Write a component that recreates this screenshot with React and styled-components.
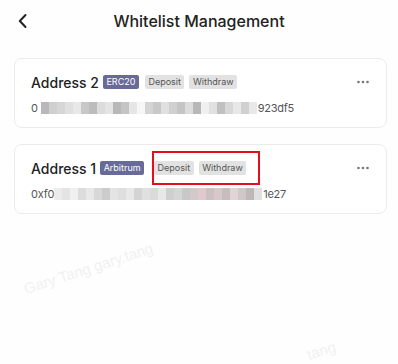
import React from "react";
import styled, { createGlobalStyle } from "styled-components";

const addresses = [
  {
    id: 2,
    name: "Address 2",
    network: "ERC20",
    head: "0",
    tail: "923df5",
    mosaic: [
      "#b8b8b8", "#cfcfcf", "#d6d6d6", "#e0e0e0", "#e8e8e8", "#c8c8c8", "#bcbcbc",
      "#dcdcdc", "#e4e4e4", "#b8b8b8", "#c4c4c4", "#e6e6e6", "#f6f6f6", "#d4d4d4",
      "#c8c8c8", "#e0e0e0", "#d0d0d0", "#c4c4c4", "#dcdcdc", "#b8b8b8", "#f0f0f0",
      "#e0e0e0", "#c0c0c0", "#d8d8d8", "#e8e8e8", "#d0d0d0", "#e8e8e8",
    ],
    gapBefore: 3,
  },
  {
    id: 1,
    name: "Address 1",
    network: "Arbitrum",
    head: "0xf0",
    tail: "1e27",
    mosaic: [
      "#ececec", "#e4e4e4", "#f0f0f0", "#dcdcdc", "#e8e8e8", "#d8d8d8", "#cccccc",
      "#e4e4e4", "#dedede", "#e8e8e8", "#d4d4d4", "#e0e0e0", "#dadada", "#e8e8e8",
      "#cfcfcf", "#d6d6d6", "#c8c8c8", "#d4c8ca", "#e0c8cc", "#ccc0c2", "#d8c8ca",
      "#c8bcbe", "#e0d4d6", "#d0c8c8", "#c0b8b8", "#e0e0e0",
    ],
    gapBefore: 0,
    highlighted: true,
  },
];

const App = () => {
  return (
    <Page>
      <GlobalStyle />
      <Header>
        <BackButton>
          <svg width="12" height="16" viewBox="0 0 12 16" fill="none">
            <path
              d="M8.5 2 L2.8 8 L8.5 14"
              stroke="#222"
              strokeWidth="2"
              strokeLinecap="round"
              strokeLinejoin="round"
            />
          </svg>
        </BackButton>
        <Title>Whitelist Management</Title>
        <span />
      </Header>

      <List>
        {addresses.map((item) => (
          <Card key={item.id}>
            <TopRow>
              <Name>{item.name}</Name>
              <NetworkTag>{item.network}</NetworkTag>
              <Permissions highlighted={item.highlighted}>
                <PermTag>Deposit</PermTag>
                <PermTag>Withdraw</PermTag>
                {item.highlighted && <Highlight />}
              </Permissions>
              <More>
                <svg width="12" height="4" viewBox="0 0 12 4">
                  <circle cx="1.5" cy="2" r="1.3" fill="#777" />
                  <circle cx="6" cy="2" r="1.3" fill="#777" />
                  <circle cx="10.5" cy="2" r="1.3" fill="#777" />
                </svg>
              </More>
            </TopRow>
            <AddressLine>
              <span>{item.head}</span>
              <Mosaic gapBefore={item.gapBefore}>
                {item.mosaic.map((c, i) => (
                  <Block key={i} style={{ background: c }} />
                ))}
              </Mosaic>
              <span>{item.tail}</span>
            </AddressLine>
          </Card>
        ))}
      </List>

      <Watermark top={280} left={27}>Gary Tang gary.tang</Watermark>
      <Watermark top={346} left={310}>tang</Watermark>
    </Page>
  );
};

const GlobalStyle = createGlobalStyle`
  html, body {
    margin: 0;
    padding: 0;
    background: #fefefe;
  }
  body {
    font-family: Inter, "Noto Sans", sans-serif;
    color: #222;
  }
`;

const Page = styled.div`
  position: relative;
  width: 398px;
  height: 364px;
  overflow: hidden;
  background: #fefefe;
`;

const Header = styled.div`
  height: 42px;
  display: grid;
  grid-template-columns: 1fr auto 1fr;
  align-items: center;
  padding: 0 16px;
`;

const BackButton = styled.div`
  display: flex;
  align-items: center;
  width: 20px;
  height: 20px;
  margin-left: 1px;
`;

const Title = styled.h1`
  margin: 0;
  font-size: 16px;
  font-weight: 500;
  color: #222;
`;

const List = styled.div`
  display: flex;
  flex-direction: column;
  gap: 16px;
  padding: 16px 11px 0 14px;
`;

const Card = styled.div`
  border: 1px solid #ebebeb;
  border-radius: 8px;
  background: #fff;
  padding: 13px 16px 11px;
`;

const TopRow = styled.div`
  display: flex;
  align-items: center;
  height: 20px;
`;

const Name = styled.span`
  font-size: 14px;
  font-weight: 500;
  color: #222;
  margin-right: 4px;
`;

const Tag = styled.span`
  display: inline-block;
  height: 14px;
  line-height: 14px;
  padding: 0 3.5px;
  border-radius: 2px;
  font-size: 9px;
`;

const NetworkTag = styled(Tag)`
  background: #686a98;
  color: #fff;
`;

const Permissions = styled.span`
  position: relative;
  display: flex;
  gap: 5px;
  margin-left: ${(p) => (p.highlighted ? "10px" : "6px")};
`;

const PermTag = styled(Tag)`
  background: #e2e2e2;
  color: #555;
`;

const Highlight = styled.span`
  position: absolute;
  left: -2px;
  top: -10px;
  width: 104px;
  height: 30px;
  border: 2px solid #e3101c;
  pointer-events: none;
`;

const More = styled.span`
  margin-left: auto;
  display: flex;
  align-items: center;
  margin-right: 1px;
`;

const AddressLine = styled.div`
  display: flex;
  align-items: center;
  margin-top: 8px;
  height: 16px;
  font-size: 11px;
  color: #555;
  letter-spacing: -0.25px;
`;

const Mosaic = styled.span`
  display: inline-flex;
  height: 12px;
  margin-left: ${(p) => p.gapBefore}px;
  margin-right: 1px;
`;

const Block = styled.span`
  width: 8px;
  height: 100%;
`;

const Watermark = styled.span`
  position: absolute;
  top: ${(p) => p.top}px;
  left: ${(p) => p.left}px;
  font-size: 15px;
  color: #f1f1f1;
  transform: rotate(-18deg);
  transform-origin: left bottom;
  white-space: nowrap;
  pointer-events: none;
  font-family: "Liberation Sans", sans-serif;
`;

export default App;
